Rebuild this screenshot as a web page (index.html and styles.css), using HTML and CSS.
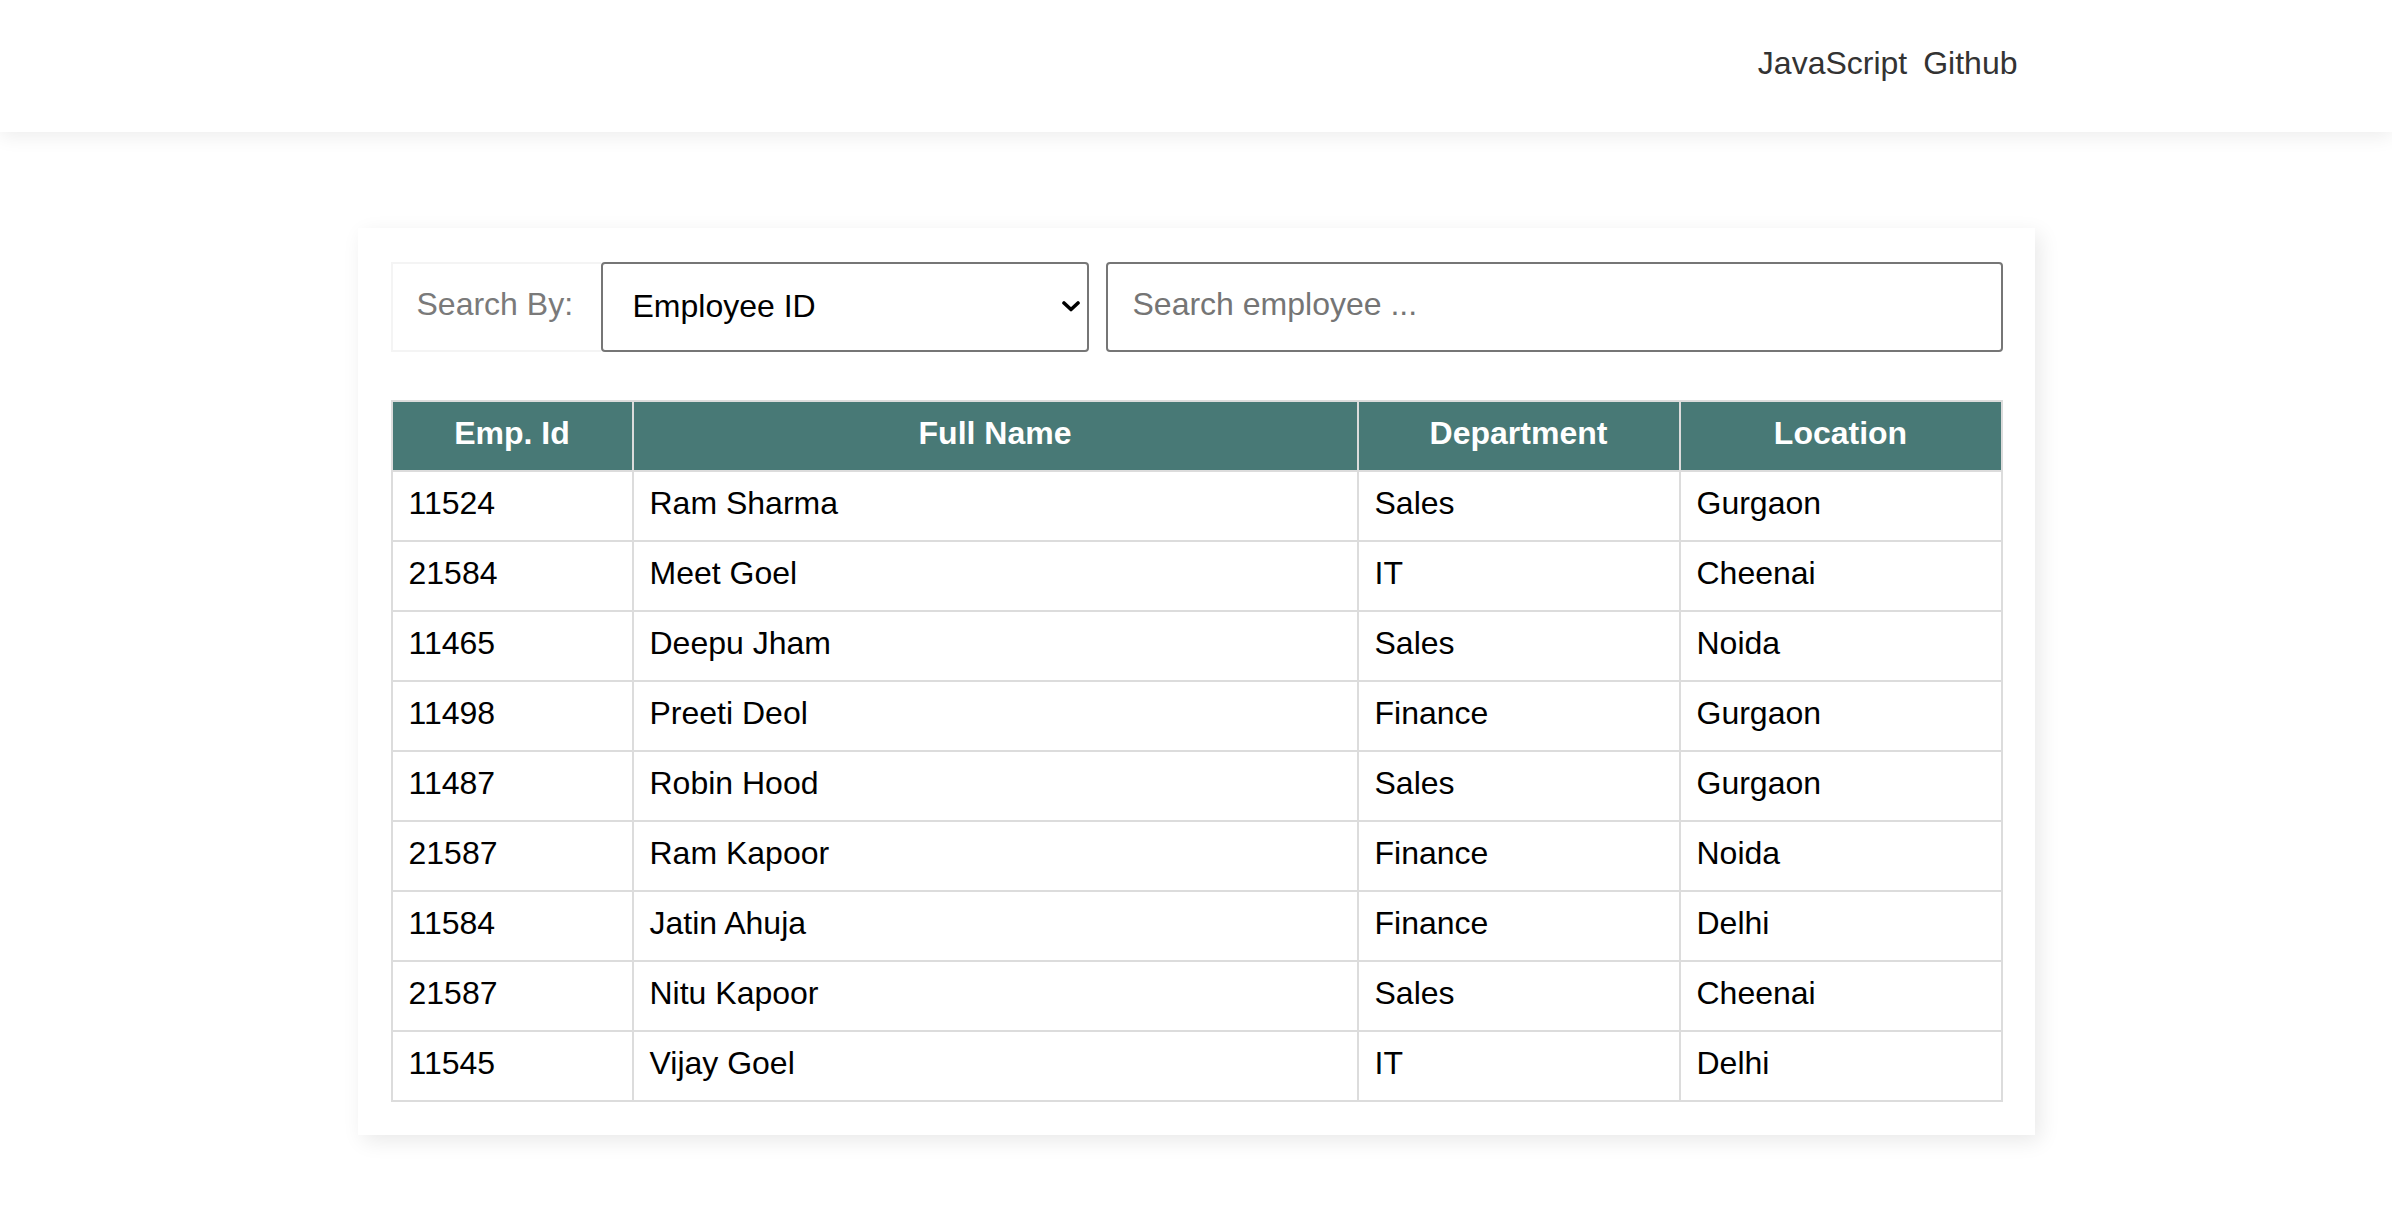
FILE: index.html
```html
<!DOCTYPE html>
<html lang="en">
<head>
<meta charset="utf-8">
<title>Employee Search</title>
<link rel="stylesheet" href="styles.css">
</head>
<body>
<header class="navbar">
  <nav class="nav-inner">
    <a class="nav-link" href="#">JavaScript</a>
    <a class="nav-link" href="#">Github</a>
  </nav>
</header>
<main class="card">
  <div class="search-row">
    <label class="search-label" for="searchBy">Search By:</label>
    <div class="select-wrap">
      <select id="searchBy" class="search-select">
        <option>Employee ID</option>
        <option>Full Name</option>
        <option>Department</option>
        <option>Location</option>
      </select>
      <svg class="chevron" width="18" height="11" viewBox="0 0 18 11" aria-hidden="true"><polyline points="2,2 9,8.5 16,2" fill="none" stroke="#000" stroke-width="3.6" stroke-linecap="round" stroke-linejoin="round"/></svg>
    </div>
    <input class="search-input" type="text" placeholder="Search employee ...">
  </div>
  <table class="emp-table">
    <colgroup>
      <col class="col-id"><col class="col-name"><col class="col-dept"><col class="col-loc">
    </colgroup>
    <thead>
      <tr><th>Emp. Id</th><th>Full Name</th><th>Department</th><th>Location</th></tr>
    </thead>
    <tbody>
      <tr><td>11524</td><td>Ram Sharma</td><td>Sales</td><td>Gurgaon</td></tr>
      <tr><td>21584</td><td>Meet Goel</td><td>IT</td><td>Cheenai</td></tr>
      <tr><td>11465</td><td>Deepu Jham</td><td>Sales</td><td>Noida</td></tr>
      <tr><td>11498</td><td>Preeti Deol</td><td>Finance</td><td>Gurgaon</td></tr>
      <tr><td>11487</td><td>Robin Hood</td><td>Sales</td><td>Gurgaon</td></tr>
      <tr><td>21587</td><td>Ram Kapoor</td><td>Finance</td><td>Noida</td></tr>
      <tr><td>11584</td><td>Jatin Ahuja</td><td>Finance</td><td>Delhi</td></tr>
      <tr><td>21587</td><td>Nitu Kapoor</td><td>Sales</td><td>Cheenai</td></tr>
      <tr><td>11545</td><td>Vijay Goel</td><td>IT</td><td>Delhi</td></tr>
    </tbody>
  </table>
</main>
</body>
</html>
```
FILE: styles.css
```css
* { box-sizing: border-box; }

html, body {
  margin: 0;
  padding: 0;
  background: #fff;
}

body {
  font-family: "Liberation Sans", Arial, sans-serif;
  font-size: 32px;
  color: #000;
}

.navbar {
  height: 132px;
  background: #fff;
  box-shadow: 0 5px 18px rgba(0, 0, 0, 0.07);
  padding-top: 45px;
}

.nav-inner {
  width: 1677px;
  margin: 0 auto;
  padding-right: 17px;
  display: flex;
  justify-content: flex-end;
  gap: 16px;
  line-height: 36px;
}

.nav-link {
  color: #333;
  text-decoration: none;
}

.card {
  width: 1677px;
  margin: 96px auto 60px;
  padding: 34px 32px 33px 33px;
  background: #fff;
  box-shadow: 5px 6px 20px rgba(0, 0, 0, 0.09);
}

.search-row {
  display: flex;
  height: 90px;
}

.search-label {
  width: 210px;
  height: 90px;
  border: 2px solid #f4f4f4;
  border-right: none;
  padding-left: 24px;
  padding-bottom: 6px;
  display: flex;
  align-items: center;
  color: #7a7a7a;
}

.select-wrap {
  position: relative;
  width: 488px;
  height: 90px;
}

.search-select {
  appearance: none;
  -webkit-appearance: none;
  width: 100%;
  height: 90px;
  margin: 0;
  border: 2px solid #767676;
  border-radius: 4px;
  background: #fff;
  padding: 0 40px 3px 30px;
  font-family: inherit;
  font-size: 32px;
  color: #000;
}

.chevron {
  position: absolute;
  right: 9px;
  top: 39px;
  pointer-events: none;
}

.search-input {
  flex: 1;
  height: 90px;
  margin: 0 0 0 17px;
  border: 2px solid #767676;
  border-radius: 4px;
  padding: 0 26px 5px 25px;
  font-family: inherit;
  font-size: 32px;
  color: #000;
  background: #fff;
}

.search-input::placeholder {
  color: #757575;
}

.emp-table {
  width: 100%;
  margin-top: 48px;
  table-layout: fixed;
  border-collapse: separate;
  border-spacing: 0;
  border-top: 2px solid #dcdcdc;
  border-left: 2px solid #dcdcdc;
}

.col-id { width: 241px; }
.col-name { width: 725px; }
.col-dept { width: 322px; }
.col-loc { width: 322px; }

.emp-table th,
.emp-table td {
  border-right: 2px solid #dcdcdc;
  border-bottom: 2px solid #dcdcdc;
  padding: 13px 16px 19px;
  line-height: 36px;
  font-size: 32px;
}

.emp-table th {
  background: #487976;
  color: #fff;
  font-weight: bold;
  text-align: center;
}

.emp-table td {
  text-align: left;
  color: #000;
}
```
